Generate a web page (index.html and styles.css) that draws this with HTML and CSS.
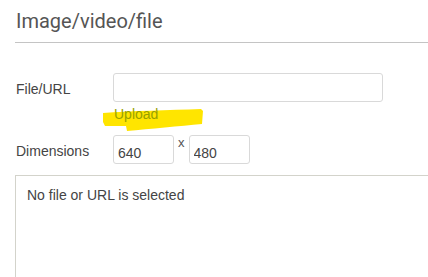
FILE: index.html
```html
<!DOCTYPE html>
<html lang="en">
<head>
    <meta charset="UTF-8">
    <title>Image/video/file</title>
    <link rel="stylesheet" href="styles.css">
</head>
<body>
    <div class="panel">
        <h2 class="panel-title">Image/video/file</h2>
        <div class="form">
            <label class="form-label" for="fileUrl">File/URL</label>
            <div class="form-field">
                <input type="text" id="fileUrl" class="text-input wide">
                <div class="upload-row">
                    <svg class="marker" width="106" height="27" viewBox="0 0 106 27">
                        <path d="M3,6 C30,4 70,3 101,2 L103,4 L102,17 C80,19 50,22 27,24 L26,19 C18,19 10,19 5,19 L3,15 Z" fill="#ffe500"/>
                    </svg>
                    <a class="upload-link" href="#">Upload</a>
                </div>
            </div>
            <label class="form-label" for="dimW">Dimensions</label>
            <div class="form-field dims">
                <input type="text" id="dimW" class="text-input small" value="640">
                <span class="times">x</span>
                <input type="text" id="dimH" class="text-input small" value="480">
            </div>
        </div>
        <div class="preview">No file or URL is selected</div>
    </div>
</body>
</html>
```

FILE: styles.css
```css
body {
    margin: 0;
    overflow: hidden;
    background: #fff;
    font-family: 'Liberation Sans', Arial, sans-serif;
    font-size: 14px;
    color: #333;
}
.panel {
    width: 440px;
    padding-left: 15px;
}
.panel-title {
    margin: 0;
    padding: 9px 0 9px 1px;
    font-family: Roboto, sans-serif;
    font-weight: 400;
    font-size: 20px;
    line-height: 24px;
    color: #555;
    border-bottom: 1px solid #c4c4c4;
}
.form {
    display: grid;
    grid-template-columns: 98px 1fr;
    row-gap: 13px;
    margin-top: 30px;
}
.form-label {
    padding-left: 1px;
    line-height: 16px;
    margin-top: 8px;
    color: #444;
}
.form-field {
    display: flex;
    flex-direction: column;
}
.text-input {
    display: block;
    box-sizing: border-box;
    height: 29px;
    padding: 6px 4px 0;
    border: 1px solid #d9d9d9;
    border-radius: 3px;
    font-family: 'Liberation Sans', Arial, sans-serif;
    font-size: 14px;
    line-height: 16px;
    color: #444;
    outline: none;
}
.text-input.wide {
    width: 270px;
}
.text-input.small {
    width: 61px;
}
.upload-row {
    position: relative;
    height: 16px;
    margin-top: 4px;
    line-height: 16px;
}
.marker {
    position: absolute;
    left: -13px;
    top: 1px;
}
.upload-link {
    position: relative;
    padding-left: 1px;
    color: #98a000;
    text-decoration: none;
}
.dims {
    flex-direction: row;
    align-items: flex-start;
    height: 29px;
}
.times {
    margin: 1px 4px 0 4px;
    font-size: 13px;
    line-height: 14px;
    color: #555;
}
.preview {
    margin-top: 11px;
    height: 120px;
    padding: 11px 11px;
    border: 1px solid #d3d3cb;
    border-right: none;
    line-height: 16px;
    color: #444;
}
```
